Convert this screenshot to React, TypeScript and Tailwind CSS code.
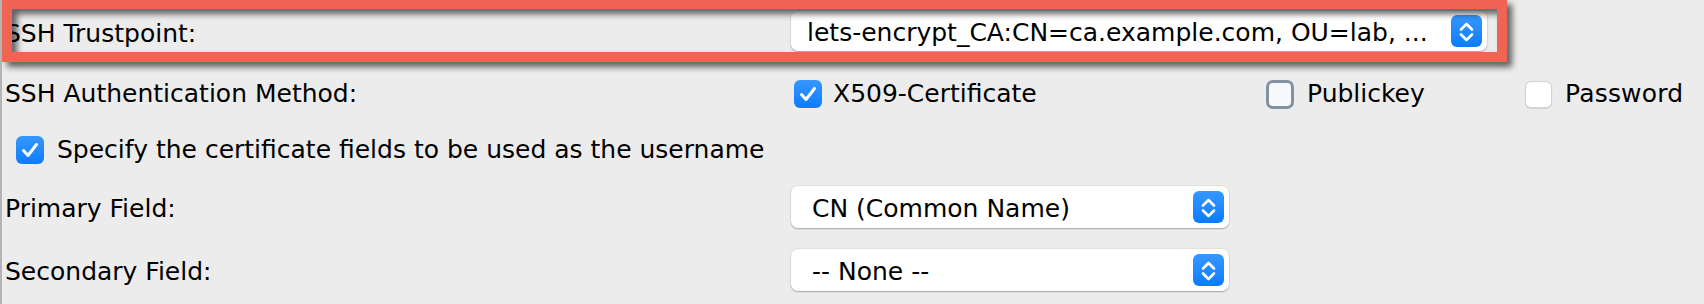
import React from 'react';

function Stepper() {
  return (
    <div className="mr-[5px] flex h-[32px] w-[31px] items-center justify-center rounded-[6px] bg-gradient-to-b from-[#3597ff] to-[#0a7bff]">
      <svg width="31" height="32" viewBox="0 0 31 32" fill="none">
        <path d="M10 14.5 L15.5 9 L21 14.5" stroke="white" strokeWidth="2.6" strokeLinecap="round" strokeLinejoin="round" />
        <path d="M10 19.5 L15.5 25 L21 19.5" stroke="white" strokeWidth="2.6" strokeLinecap="round" strokeLinejoin="round" />
      </svg>
    </div>
  );
}

function Select({ value, className, textPad }: { value: string; className: string; textPad: string }) {
  return (
    <div
      className={`flex items-center justify-between rounded-[7px] bg-white shadow-[0_1px_1.5px_rgba(0,0,0,0.28),0_0_0_0.5px_rgba(0,0,0,0.08)] ${className}`}
    >
      <span className={`truncate pt-[4px] ${textPad}`}>{value}</span>
      <Stepper />
    </div>
  );
}

function CheckOn() {
  return (
    <div className="flex h-[28px] w-[28px] shrink-0 items-center justify-center rounded-[6px] bg-gradient-to-b from-[#3597ff] to-[#0a7bff]">
      <svg width="28" height="28" viewBox="0 0 28 28" fill="none">
        <path d="M7.5 14.5 L12 19.5 L20.5 8.5" stroke="white" strokeWidth="3" strokeLinecap="round" strokeLinejoin="round" />
      </svg>
    </div>
  );
}

export default function App() {
  return (
    <div
      className="relative h-[304px] w-[1704px] overflow-hidden border-l-[2px] border-[#b4b4b4] bg-[#ececec] text-[25px] text-black"
      style={{ fontFamily: '"DejaVu Sans", "Liberation Sans", sans-serif' }}
    >
      <div className="flex flex-col">
        <div className="flex h-[64px] items-center">
          <div className="w-[789px] pl-[3px] pt-[3px]">SSH Trustpoint:</div>
          <Select
            value="lets-encrypt_CA:CN=ca.example.com, OU=lab, ..."
            className="mb-[2px] h-[40px] w-[696px]"
            textPad="pl-[16px]"
          />
        </div>

        <div className="flex h-[60px] items-center">
          <div className="w-[792px] pl-[3px]">SSH Authentication Method:</div>
          <div className="flex w-[472px] items-center gap-[11px]">
            <CheckOn />
            <span>X509-Certificate</span>
          </div>
          <div className="flex w-[259px] items-center gap-[13px]">
            <div className="h-[29px] w-[28px] shrink-0 rounded-[7px] border-[3px] border-[#8290a0] bg-[#f6f9fc]" />
            <span>Publickey</span>
          </div>
          <div className="flex items-center gap-[13px]">
            <div className="h-[27px] w-[27px] shrink-0 rounded-[6px] border border-[#d2d2d2] bg-white shadow-[0_0.5px_1px_rgba(0,0,0,0.12)]" />
            <span className="tracking-[0.2px]">Password</span>
          </div>
        </div>

        <div className="flex h-[52px] items-center gap-[13px] pl-[14px]">
          <CheckOn />
          <span>Specify the certificate fields to be used as the username</span>
        </div>

        <div className="flex h-[62px] items-center">
          <div className="w-[789px] pl-[3px] pt-[4px]">Primary Field:</div>
          <Select value="CN (Common Name)" className="h-[42px] w-[438px]" textPad="pl-[21px]" />
        </div>

        <div className="flex h-[64px] items-center">
          <div className="w-[789px] pl-[3px] pt-[3px]">Secondary Field:</div>
          <Select value="-- None --" className="h-[42px] w-[438px]" textPad="pl-[21px]" />
        </div>
      </div>

      {/* annotation box over the first row */}
      <div className="pointer-events-none absolute left-0 top-[-1px] h-[63px] w-[1505px] border-[10px] border-[#ef6453] drop-shadow-[5px_5px_3px_rgba(0,0,0,0.6)]" />
    </div>
  );
}
